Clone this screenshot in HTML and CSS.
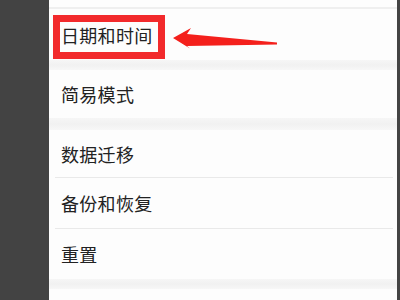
FILE: index.html
```html
<!DOCTYPE html>
<html lang="zh">
<head>
<meta charset="utf-8">
<link rel="stylesheet" href="styles.css">
</head>
<body>
<div class="screen">
  <div class="side-left"></div>
  <div class="main">
    <div class="top-gap"></div>
    <div class="row r1">日期和时间</div>
    <div class="band b1"></div>
    <div class="row r2">简易模式</div>
    <div class="band b2"></div>
    <div class="row r3">数据迁移</div>
    <div class="divider"></div>
    <div class="row r4">备份和恢复</div>
    <div class="divider"></div>
    <div class="row r5">重置</div>
    <div class="band b3"></div>
    <div class="bottom"></div>
  </div>
  <div class="side-right"></div>
  <div class="highlight"></div>
  <svg class="arrow" width="400" height="300" viewBox="0 0 400 300">
    <path d="M173 38 L191 28 L187 34 L277 42.5 L277 44.5 L187 46 L190 48.5 Z" fill="#f4201c"/>
  </svg>
</div>
</body>
</html>
```
FILE: styles.css
```css
html, body {
  margin: 0;
  padding: 0;
}
body {
  width: 400px;
  height: 300px;
  overflow: hidden;
  background: #fdfdfd;
  font-family: "Noto Sans CJK SC", "Noto Sans", sans-serif;
}
.screen {
  position: relative;
  display: flex;
  width: 400px;
  height: 300px;
}
.side-left {
  width: 49px;
  background: #434343;
}
.side-right {
  width: 3px;
  background: #444444;
}
.main {
  flex: 1;
  display: flex;
  flex-direction: column;
  background: #fdfdfd;
}
.top-gap {
  height: 7px;
  border-bottom: 2px solid #efefef;
}
.row {
  display: flex;
  align-items: center;
  padding-left: 12px;
  font-size: 18px;
  color: #222222;
  letter-spacing: 0.3px;
}
.r1 { height: 51px; }
.r2 { height: 48px; }
.r3 { height: 47px; }
.r4 { height: 50px; }
.r5 { height: 50px; }
.band {
  background: linear-gradient(#f6f6f6, #f1f1f1 50%, #f7f7f7);
}
.b1 { height: 10px; }
.b2 { height: 12px; }
.b3 { height: 10px; }
.divider {
  height: 1px;
  margin: 0 4px 0 6px;
  background: #e9e9e9;
}
.bottom {
  flex: 1;
}
.highlight {
  position: absolute;
  left: 53px;
  top: 15px;
  width: 98px;
  height: 30px;
  border: 7px solid #f22a2c;
}
.arrow {
  position: absolute;
  left: 0;
  top: 0;
}
```
